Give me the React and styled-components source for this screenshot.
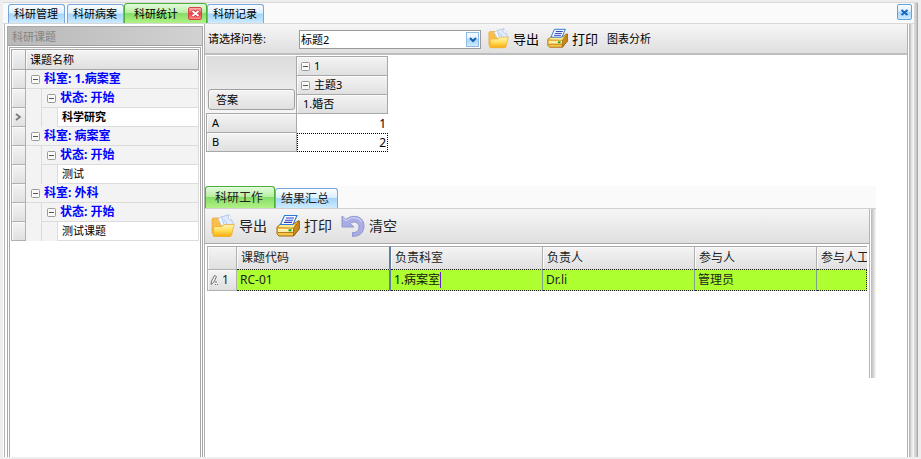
import React from "react";
import styled, { createGlobalStyle, css } from "styled-components";

const sidebarRows = [
  { level: 0, text: "科室: 1.病案室" },
  { level: 1, text: "状态: 开始" },
  { level: 2, text: "科学研究", active: true },
  { level: 0, text: "科室: 病案室" },
  { level: 1, text: "状态: 开始" },
  { level: 2, text: "测试" },
  { level: 0, text: "科室: 外科" },
  { level: 1, text: "状态: 开始" },
  { level: 2, text: "测试课题" },
];

const FolderIcon = ({ size }) => (
  <svg width={size} height={size} viewBox="0 0 24 24" aria-hidden="true">
    <defs>
      <linearGradient id="folderFront" x1="0" y1="0" x2="0" y2="1">
        <stop offset="0" stopColor="#fff7b8" />
        <stop offset="0.5" stopColor="#ffde5a" />
        <stop offset="1" stopColor="#fbaa08" />
      </linearGradient>
    </defs>
    <path d="M1 5 L2 4 H8 L10 6.5 H20 V21 H3 L1 19Z" fill="#f8c04a" stroke="#eba232" strokeWidth="0.7" />
    <path d="M7 5 L11 2.5 L17 12 H11Z" fill="#f4f8fe" stroke="#b4cae8" strokeWidth="0.7" />
    <path d="M10.5 2.8 L18 0.8 L22.5 10 L20 14 H14Z" fill="#dfeafa" stroke="#a3bfe2" strokeWidth="0.8" />
    <path d="M13 5.5 L17.5 12" stroke="#b6cdec" strokeWidth="1" />
    <path d="M18 0.8 L17 4.5 L21 6.5" fill="#fff" stroke="#a3bfe2" strokeWidth="0.7" />
    <path d="M2 22 L3 12.5 H11 L14 10.5 H23.2 L20.5 21.5 Q20 22.5 19 22.5 H3Z" fill="url(#folderFront)" stroke="#f0ac2c" strokeWidth="0.8" />
  </svg>
);

const PrinterIcon = ({ size }) => (
  <svg width={size} height={size} viewBox="0 0 24 24" aria-hidden="true">
    <path d="M1 13 L6 9 H19 L23 6.5 V15 L17.5 22 H3 L1 20Z" fill="#f6c548" stroke="#a46a0c" strokeWidth="1" />
    <path d="M17.5 14 L23.3 7 V15 L17.5 22Z" fill="#c98a1c" stroke="#945c08" strokeWidth="0.8" />
    <path d="M1 13.5 L5 10 H20 L17.5 14Z" fill="#ffe996" stroke="#b8841c" strokeWidth="0.7" />
    <path d="M4.5 10.5 L8.5 1.5 H21 L17 10.5Z" fill="#f7fbff" stroke="#2a7ad0" strokeWidth="1.1" />
    <path d="M10 4 H18 M9 6.2 H17 M8 8.4 H16" stroke="#343cc8" strokeWidth="1.1" />
    <path d="M2 15 H17 V18 H2Z" fill="#fff0ac" />
    <path d="M1.5 18.5 H17.5" stroke="#b77c14" strokeWidth="1" />
    <rect x="12.5" y="15.3" width="3" height="2" fill="#10a41c" />
  </svg>
);

const UndoIcon = ({ size }) => (
  <svg width={size} height={size} viewBox="0 0 24 24" aria-hidden="true">
    <path
      d="M1 2 L5 5.5 C11 0 23 1.5 23 12 C23 19 18 22.5 11.5 22.5 V18.5 C15.5 19 18 16.5 18 13 C18 8.5 13 6.5 9 9.5 L13 13 H1Z"
      fill="#a9ade2"
      stroke="#8c90cf"
      strokeWidth="0.9"
    />
    <path d="M2.2 4.2 L5 6.8 C10 2.5 18 2.8 20.6 8" fill="none" stroke="#d0d3f4" strokeWidth="1.1" />
  </svg>
);

const PencilIcon = () => (
  <svg width="9" height="12" viewBox="0 0 9 12" aria-hidden="true">
    <path d="M1 10.5 L1.5 7 L4.5 1.5 L6.5 2.5 L3.8 8.2Z M6 7 V9" fill="#f4f4f4" stroke="#666" strokeWidth="0.9" />
    <path d="M5 10.5 H8" stroke="#777" strokeDasharray="1 1" />
  </svg>
);

const CrossIcon = ({ color, halo }) => (
  <svg width="9" height="9" viewBox="0 0 9 9" aria-hidden="true">
    {halo && <path d="M1.5 1.5 L7.5 7.5 M7.5 1.5 L1.5 7.5" stroke={halo} strokeWidth="3" />}
    <path d="M1.5 2 L7.5 7 M7.5 2 L1.5 7" stroke={color} strokeWidth="2" />
  </svg>
);

const Minus = ({ label }) => (
  <Expander type="button" aria-label={label}>
    <svg width="9" height="9" viewBox="0 0 9 9" aria-hidden="true">
      <rect x="0.5" y="0.5" width="8" height="8" rx="1" fill="#fafafa" stroke="#999" />
      <path d="M2 4.5 H7" stroke="#555" />
    </svg>
  </Expander>
);

const Sidebar = () => (
  <SidebarPanel>
    <SidebarTitle>科研课题</SidebarTitle>
    <SidebarFrame>
      <TreeTable>
        <thead>
          <tr>
            <GutterHead />
            <TreeHead>课题名称</TreeHead>
          </tr>
        </thead>
        <tbody>
          {sidebarRows.map((row, i) => (
            <tr key={i}>
              <Gutter>
                {row.active && (
                  <svg width="7" height="8" viewBox="0 0 7 8" aria-hidden="true">
                    <path d="M1 1 L5 4 L1 7" fill="none" stroke="#777" strokeWidth="1.6" />
                  </svg>
                )}
              </Gutter>
              <TreeCell>
                <TreeRow>
                  {row.level > 0 && <Indent />}
                  {row.level > 1 && <Indent />}
                  {row.level < 2 ? (
                    <GroupLabel>
                      <Minus label="折叠" />
                      {row.text}
                    </GroupLabel>
                  ) : (
                    <LeafLabel $active={row.active}>{row.text}</LeafLabel>
                  )}
                </TreeRow>
              </TreeCell>
            </tr>
          ))}
        </tbody>
      </TreeTable>
    </SidebarFrame>
  </SidebarPanel>
);

const Pivot = () => (
  <PivotTable>
    <thead>
      <tr>
        <PivotCorner rowSpan={3}>
          <FieldButton type="button">答案</FieldButton>
        </PivotCorner>
        <PivotHead>
          <HeadLabel>
            <Minus label="折叠 1" />1
          </HeadLabel>
        </PivotHead>
      </tr>
      <tr>
        <PivotHead>
          <HeadLabel>
            <Minus label="折叠 主题3" />
            主题3
          </HeadLabel>
        </PivotHead>
      </tr>
      <tr>
        <PivotHead>1.婚否</PivotHead>
      </tr>
    </thead>
    <tbody>
      <tr>
        <PivotRowHead scope="row">A</PivotRowHead>
        <PivotValue>1</PivotValue>
      </tr>
      <tr>
        <PivotRowHead scope="row">B</PivotRowHead>
        <PivotValue $focused>2</PivotValue>
      </tr>
    </tbody>
  </PivotTable>
);

const WorkPanel = () => (
  <WorkBox>
    <WorkTabs>
      <WorkTab type="button" $active>
        科研工作
      </WorkTab>
      <WorkTab type="button">结果汇总</WorkTab>
    </WorkTabs>
    <WorkBody>
      <WorkContent>
        <WorkToolbar>
          <ToolButton type="button" $large>
            <FolderIcon size={24} />
            导出
          </ToolButton>
          <ToolButton type="button" $large>
            <PrinterIcon size={24} />
            打印
          </ToolButton>
          <ToolButton type="button" $large>
            <UndoIcon size={24} />
            清空
          </ToolButton>
        </WorkToolbar>
        <GridClip>
          <WorkGrid>
            <colgroup>
              <col width="30" />
              <col width="154" />
              <col width="152" />
              <col width="152" />
              <col width="122" />
              <col />
            </colgroup>
            <thead>
              <tr>
                <WorkHead />
                <WorkHead $strong>课题代码</WorkHead>
                <WorkHead>负责科室</WorkHead>
                <WorkHead>负责人</WorkHead>
                <WorkHead>参与人</WorkHead>
                <WorkHead>参与人工</WorkHead>
              </tr>
            </thead>
            <tbody>
              <tr>
                <RowIndicator scope="row">
                  <IndicatorLabel>
                    <PencilIcon />1
                  </IndicatorLabel>
                </RowIndicator>
                <WorkCell $strong>RC-01</WorkCell>
                <WorkCell>
                  <Editing>1.病案室</Editing>
                </WorkCell>
                <WorkCell>Dr.li</WorkCell>
                <WorkCell>管理员</WorkCell>
                <WorkCell />
              </tr>
            </tbody>
          </WorkGrid>
        </GridClip>
      </WorkContent>
      <WorkEdge />
    </WorkBody>
  </WorkBox>
);

const App = () => (
  <>
    <GlobalStyle />
    <Page>
      <Window>
        <TabStrip>
          <Tab type="button">科研管理</Tab>
          <Tab type="button" $spaced>
            科研病案
          </Tab>
          <ActiveTab>
            <ActiveTabLabel type="button">科研统计</ActiveTabLabel>
            <TabClose type="button" aria-label="关闭科研统计">
              <CrossIcon color="#fff" halo="#c41c24" />
            </TabClose>
          </ActiveTab>
          <Tab type="button">科研记录</Tab>
          <WindowClose type="button" aria-label="关闭">
            <CrossIcon color="#1a66b8" />
          </WindowClose>
        </TabStrip>
        <Body>
          <Sidebar />
          <Main>
            <Toolbar>
              <SelectLabel htmlFor="survey">请选择问卷:</SelectLabel>
              <SelectBox>
                <Select id="survey" defaultValue="标题2">
                  <option>标题2</option>
                </Select>
                <SelectArrow>
                  <svg width="8" height="6" viewBox="0 0 8 6" aria-hidden="true">
                    <path d="M1 1 L4 4 L7 1" fill="none" stroke="#1a5fae" strokeWidth="2" />
                  </svg>
                </SelectArrow>
              </SelectBox>
              <ToolButton type="button">
                <FolderIcon size={21} />
                导出
              </ToolButton>
              <ToolButton type="button">
                <PrinterIcon size={21} />
                打印
              </ToolButton>
              <TextButton type="button">图表分析</TextButton>
            </Toolbar>
            <Pivot />
            <WorkPanel />
          </Main>
          <BodyEdge />
        </Body>
      </Window>
    </Page>
  </>
);

export default App;

const GlobalStyle = createGlobalStyle`
  *, *::before, *::after {
    box-sizing: border-box;
  }

  body {
    margin: 0;
    background: #eeeeee;
    color: #000;
    font-family: "Noto Sans", "Noto Sans CJK SC", sans-serif;
    font-size: 11px;
    line-height: 16px;
  }

  button, select {
    margin: 0;
    padding: 0;
    font: inherit;
    color: inherit;
  }

  button {
    border: 0;
    background: none;
    white-space: nowrap;
  }

  svg {
    display: block;
    flex: none;
  }
`;

const raised = css`
  background: linear-gradient(#f4f4f4, #e0e0e0);
  box-shadow: inset 1px 1px 0 #fafafa;
`;

const blueTab = css`
  background: linear-gradient(#fafdff 0%, #dceefe 45%, #a4d6fb 50%, #cdeaff 100%);
  border: 1px solid #79a7dc;
`;

const greenTab = css`
  background: linear-gradient(#e4fbdd 0%, #b9efa5 45%, #86dc68 50%, #b0f283 100%);
  border: 1px solid #4dae3c;
`;

const Page = styled.div`
  display: flex;
  height: 100vh;
  padding: 2px 3px;
`;

const Window = styled.div`
  flex: 1;
  min-width: 0;
  display: flex;
  flex-direction: column;
  padding-right: 4px;
  border-top: 1px solid #d8d8d8;
  background: linear-gradient(to right, #dcdcdc, #cccccc 60%, #999 100%) right / 4px 100% no-repeat;
`;

const TabStrip = styled.div`
  display: flex;
  align-items: flex-end;
  height: 21px;
  padding: 0 2px 0 5px;
  background: #fafafa;
  border-bottom: 1px solid #d8d8d8;
`;

const Tab = styled.button`
  ${blueTab}
  height: 19px;
  padding: 0 6px 0 5px;
  border-bottom: 0;
  border-radius: 3px 3px 0 0;
  margin-left: ${(props) => (props.$spaced ? "2px" : "0")};
`;

const ActiveTab = styled.div`
  ${greenTab}
  display: flex;
  align-items: center;
  height: 20px;
  padding: 0 4px 0 9px;
  gap: 10px;
  border-bottom: 0;
  border-radius: 3px 3px 0 0;
`;

const ActiveTabLabel = styled.button`
  height: 18px;
`;

const TabClose = styled.button`
  display: grid;
  place-items: center;
  width: 14px;
  height: 13px;
  border: 1px solid #d8434a;
  border-radius: 2px;
  background: linear-gradient(#ffb4b4, #ea4248 50%, #ff8c8c);
`;

const WindowClose = styled.button`
  ${blueTab}
  display: grid;
  place-items: center;
  width: 15px;
  height: 16px;
  margin-left: auto;
  align-self: flex-start;
  margin-top: 1px;
  border-color: #5da3e0;
  border-radius: 2px;
`;

const Body = styled.div`
  flex: 1;
  min-height: 0;
  display: flex;
  padding-left: 4px;
  background: linear-gradient(#b0b0b0, #b0b0b0) 1px 0 / 1px 100% no-repeat #fff;
`;

const SidebarPanel = styled.aside`
  display: flex;
  flex-direction: column;
  flex: none;
  width: 196px;
  margin: 2px 1px 0 0;
  border: 1px solid #a8a8a8;
  border-bottom: 0;
`;

const SidebarTitle = styled.div`
  height: 19px;
  padding-left: 4px;
  line-height: 19px;
  color: #848484;
  background: linear-gradient(to right, #b8b8b8, #d2d2d2);
  border-bottom: 1px solid #a0a0a0;
`;

const SidebarFrame = styled.div`
  flex: 1;
  margin: 1px 1px 0;
  padding: 1px 1px 0;
  border: 1px solid #a8a8a8;
  border-bottom: 0;
`;

const TreeTable = styled.table`
  width: 100%;
  table-layout: fixed;
  border-collapse: separate;
  border-spacing: 0;
`;

const GutterHead = styled.th`
  ${raised}
  width: 15px;
  height: 21px;
  padding: 0;
  border: 1px solid #a8a8a8;
`;

const TreeHead = styled.th`
  ${raised}
  padding: 0 0 0 4px;
  font-weight: normal;
  text-align: left;
  border: 1px solid #a8a8a8;
  border-left: 0;
`;

const Gutter = styled.td`
  ${raised}
  height: 19px;
  padding: 0 0 0 3px;
  border: 1px solid #b0b0b0;
  border-top: 0;
`;

const TreeCell = styled.td`
  height: 19px;
  padding: 0;
  background: #f3f3f3;
  border-right: 1px solid #dcdcdc;
`;

const TreeRow = styled.div`
  display: flex;
  height: 19px;
`;

const Indent = styled.span`
  width: 16px;
  border-right: 1px solid #dcdcdc;
`;

const GroupLabel = styled.span`
  flex: 1;
  display: flex;
  align-items: center;
  gap: 4px;
  padding-left: 5px;
  color: #0000ff;
  font-size: 12px;
  font-weight: bold;
  white-space: nowrap;
  border-bottom: 1px solid #dcdcdc;
`;

const LeafLabel = styled.span`
  flex: 1;
  padding: 1px 0 0 4px;
  background: #fff;
  border-bottom: 1px solid #dcdcdc;
  font-weight: ${(props) => (props.$active ? "bold" : "normal")};
`;

const Expander = styled.button`
  width: 9px;
  height: 9px;
`;

const Main = styled.main`
  flex: 1;
  min-width: 0;
  display: flex;
  flex-direction: column;
  border: solid #b0b0b0;
  border-width: 0 1px;
`;

const BodyEdge = styled.div`
  flex: none;
  width: 6px;
  background: linear-gradient(to right, #fff 1px, #b8b8b8 1px, #b8b8b8 2px, #dedede 3px, #fafafa 6px);
`;

const Toolbar = styled.div`
  display: flex;
  align-items: center;
  height: 31px;
  padding: 0 3px;
  background: linear-gradient(#f6f6f6, #dfdfdf);
  border-bottom: 2px solid #bdbdbd;
`;

const SelectLabel = styled.label`
  width: 91px;
`;

const SelectBox = styled.div`
  position: relative;
  width: 182px;
  height: 19px;
  margin: 2px 7px 0 0;
`;

const Select = styled.select`
  appearance: none;
  display: block;
  width: 100%;
  height: 100%;
  padding: 0 18px 0 1px;
  border: 1px solid #999;
  border-radius: 0;
  background: #fff;
`;

const SelectArrow = styled.span`
  ${blueTab}
  position: absolute;
  top: 2px;
  right: 2px;
  display: grid;
  place-items: center;
  width: 13px;
  height: 15px;
  border-color: #8fbbe6;
  pointer-events: none;
`;

const ToolButton = styled.button`
  display: flex;
  align-items: center;
  gap: 4px;
  margin-right: ${(props) => (props.$large ? "9px" : "8px")};
  font-size: ${(props) => (props.$large ? "14px" : "13px")};
`;

const TextButton = styled.button`
  padding: 0 1px;
`;

const PivotTable = styled.table`
  flex: none;
  width: 182px;
  margin: 1px 0 0 1px;
  table-layout: fixed;
  border-collapse: separate;
  border-spacing: 0;
  align-self: flex-start;
`;

const PivotCorner = styled.td`
  width: 91px;
  padding: 0 1px 3px 2px;
  vertical-align: bottom;
  background: linear-gradient(#dcdcdc, #f6f6f6);
  border-right: 1px solid #a8a8a8;
  border-bottom: 1px solid #a8a8a8;
`;

const FieldButton = styled.button`
  ${raised}
  display: block;
  width: 100%;
  height: 21px;
  padding-left: 7px;
  text-align: left;
  border: 1px solid #a0a0a0;
  border-radius: 3px;
`;

const PivotHead = styled.th`
  ${raised}
  height: 19px;
  padding: 0 6px;
  font-weight: normal;
  text-align: left;
  line-height: 18px;
  border: solid #a8a8a8;
  border-width: 0 1px 1px 0;

  tr:first-child > & {
    height: 20px;
    border-top-width: 1px;
  }
`;

const HeadLabel = styled.span`
  display: flex;
  align-items: center;
  gap: 4px;
  height: 17px;
  margin-left: -2px;
`;

const PivotRowHead = styled.th`
  ${raised}
  height: 19px;
  padding: 0 5px;
  font-weight: normal;
  text-align: left;
  border: solid #a8a8a8;
  border-width: 0 1px 1px;
`;

const PivotValue = styled.td`
  height: 19px;
  padding: 0 1px;
  font-size: 12px;
  text-align: right;
  border: ${(props) => (props.$focused ? "1px dotted #000" : "1px solid #fff")};
`;

const WorkBox = styled.section`
  flex: 1;
  min-height: 0;
  display: flex;
  flex-direction: column;
  margin: 34px 31px 79px 0;
  font-size: 12px;
`;

const WorkTabs = styled.div`
  display: flex;
  align-items: flex-end;
  height: 23px;
  background: #fafafa;
  border-bottom: 1px solid #d0d0d0;
`;

const WorkTab = styled.button`
  ${(props) => (props.$active ? greenTab : blueTab)}
  height: ${(props) => (props.$active ? "22px" : "20px")};
  padding: ${(props) => (props.$active ? "0 11px 0 9px" : "0 8px 0 5px")};
  border-bottom: 0;
  border-radius: 3px 3px 0 0;
  color: #222;
`;

const WorkBody = styled.div`
  flex: 1;
  display: flex;
  min-height: 0;
`;

const WorkContent = styled.div`
  flex: 1;
  min-width: 0;
  border-right: 1px solid #b4b4b4;
`;

const WorkEdge = styled.div`
  flex: none;
  width: 6px;
  background: linear-gradient(to right, #fff 1px, #b8b8b8 1px, #d0d0d0 3px, #f8f8f8 6px);
`;

const WorkToolbar = styled.div`
  display: flex;
  align-items: center;
  height: 35px;
  padding-left: 6px;
  color: #222;
  background: linear-gradient(#f6f6f6, #dfdfdf);
  border-bottom: 1px solid #a8a8a8;
`;

const GridClip = styled.div`
  margin: 2px 2px 0;
  overflow: hidden;
`;

const WorkGrid = styled.table`
  width: 100%;
  table-layout: fixed;
  border-collapse: separate;
  border-spacing: 0;
  color: #222;
`;

const WorkHead = styled.th`
  ${raised}
  height: 23px;
  padding: 0 0 0 4px;
  font-weight: normal;
  text-align: left;
  white-space: nowrap;
  overflow: hidden;
  border-top: 1px solid #a8a8a8;
  border-right: ${(props) => (props.$strong ? "2px solid #5f7fa6" : "1px solid #b0b0b0")};

  &:first-child {
    border-left: 1px solid #b0b0b0;
  }

  &:last-child {
    border-right: 0;
  }
`;

const RowIndicator = styled.th`
  ${raised}
  height: 22px;
  padding: 0 0 0 2px;
  font-weight: normal;
  border: 1px solid #b0b0b0;
`;

const IndicatorLabel = styled.span`
  display: flex;
  align-items: center;
  gap: 3px;
`;

const WorkCell = styled.td`
  height: 22px;
  padding: 0 0 0 3px;
  background: #adff2f;
  border: dotted #222;
  border-width: 1px 0;
  border-right: ${(props) => (props.$strong ? "2px solid #5f7fa6" : "1px solid #7f9f8f")};

  &:last-child {
    border-right: 1px dotted #222;
  }
`;

const Editing = styled.span`
  display: inline-block;
  color: #111;
  border-right: 1px solid #6a20d0;
`;
